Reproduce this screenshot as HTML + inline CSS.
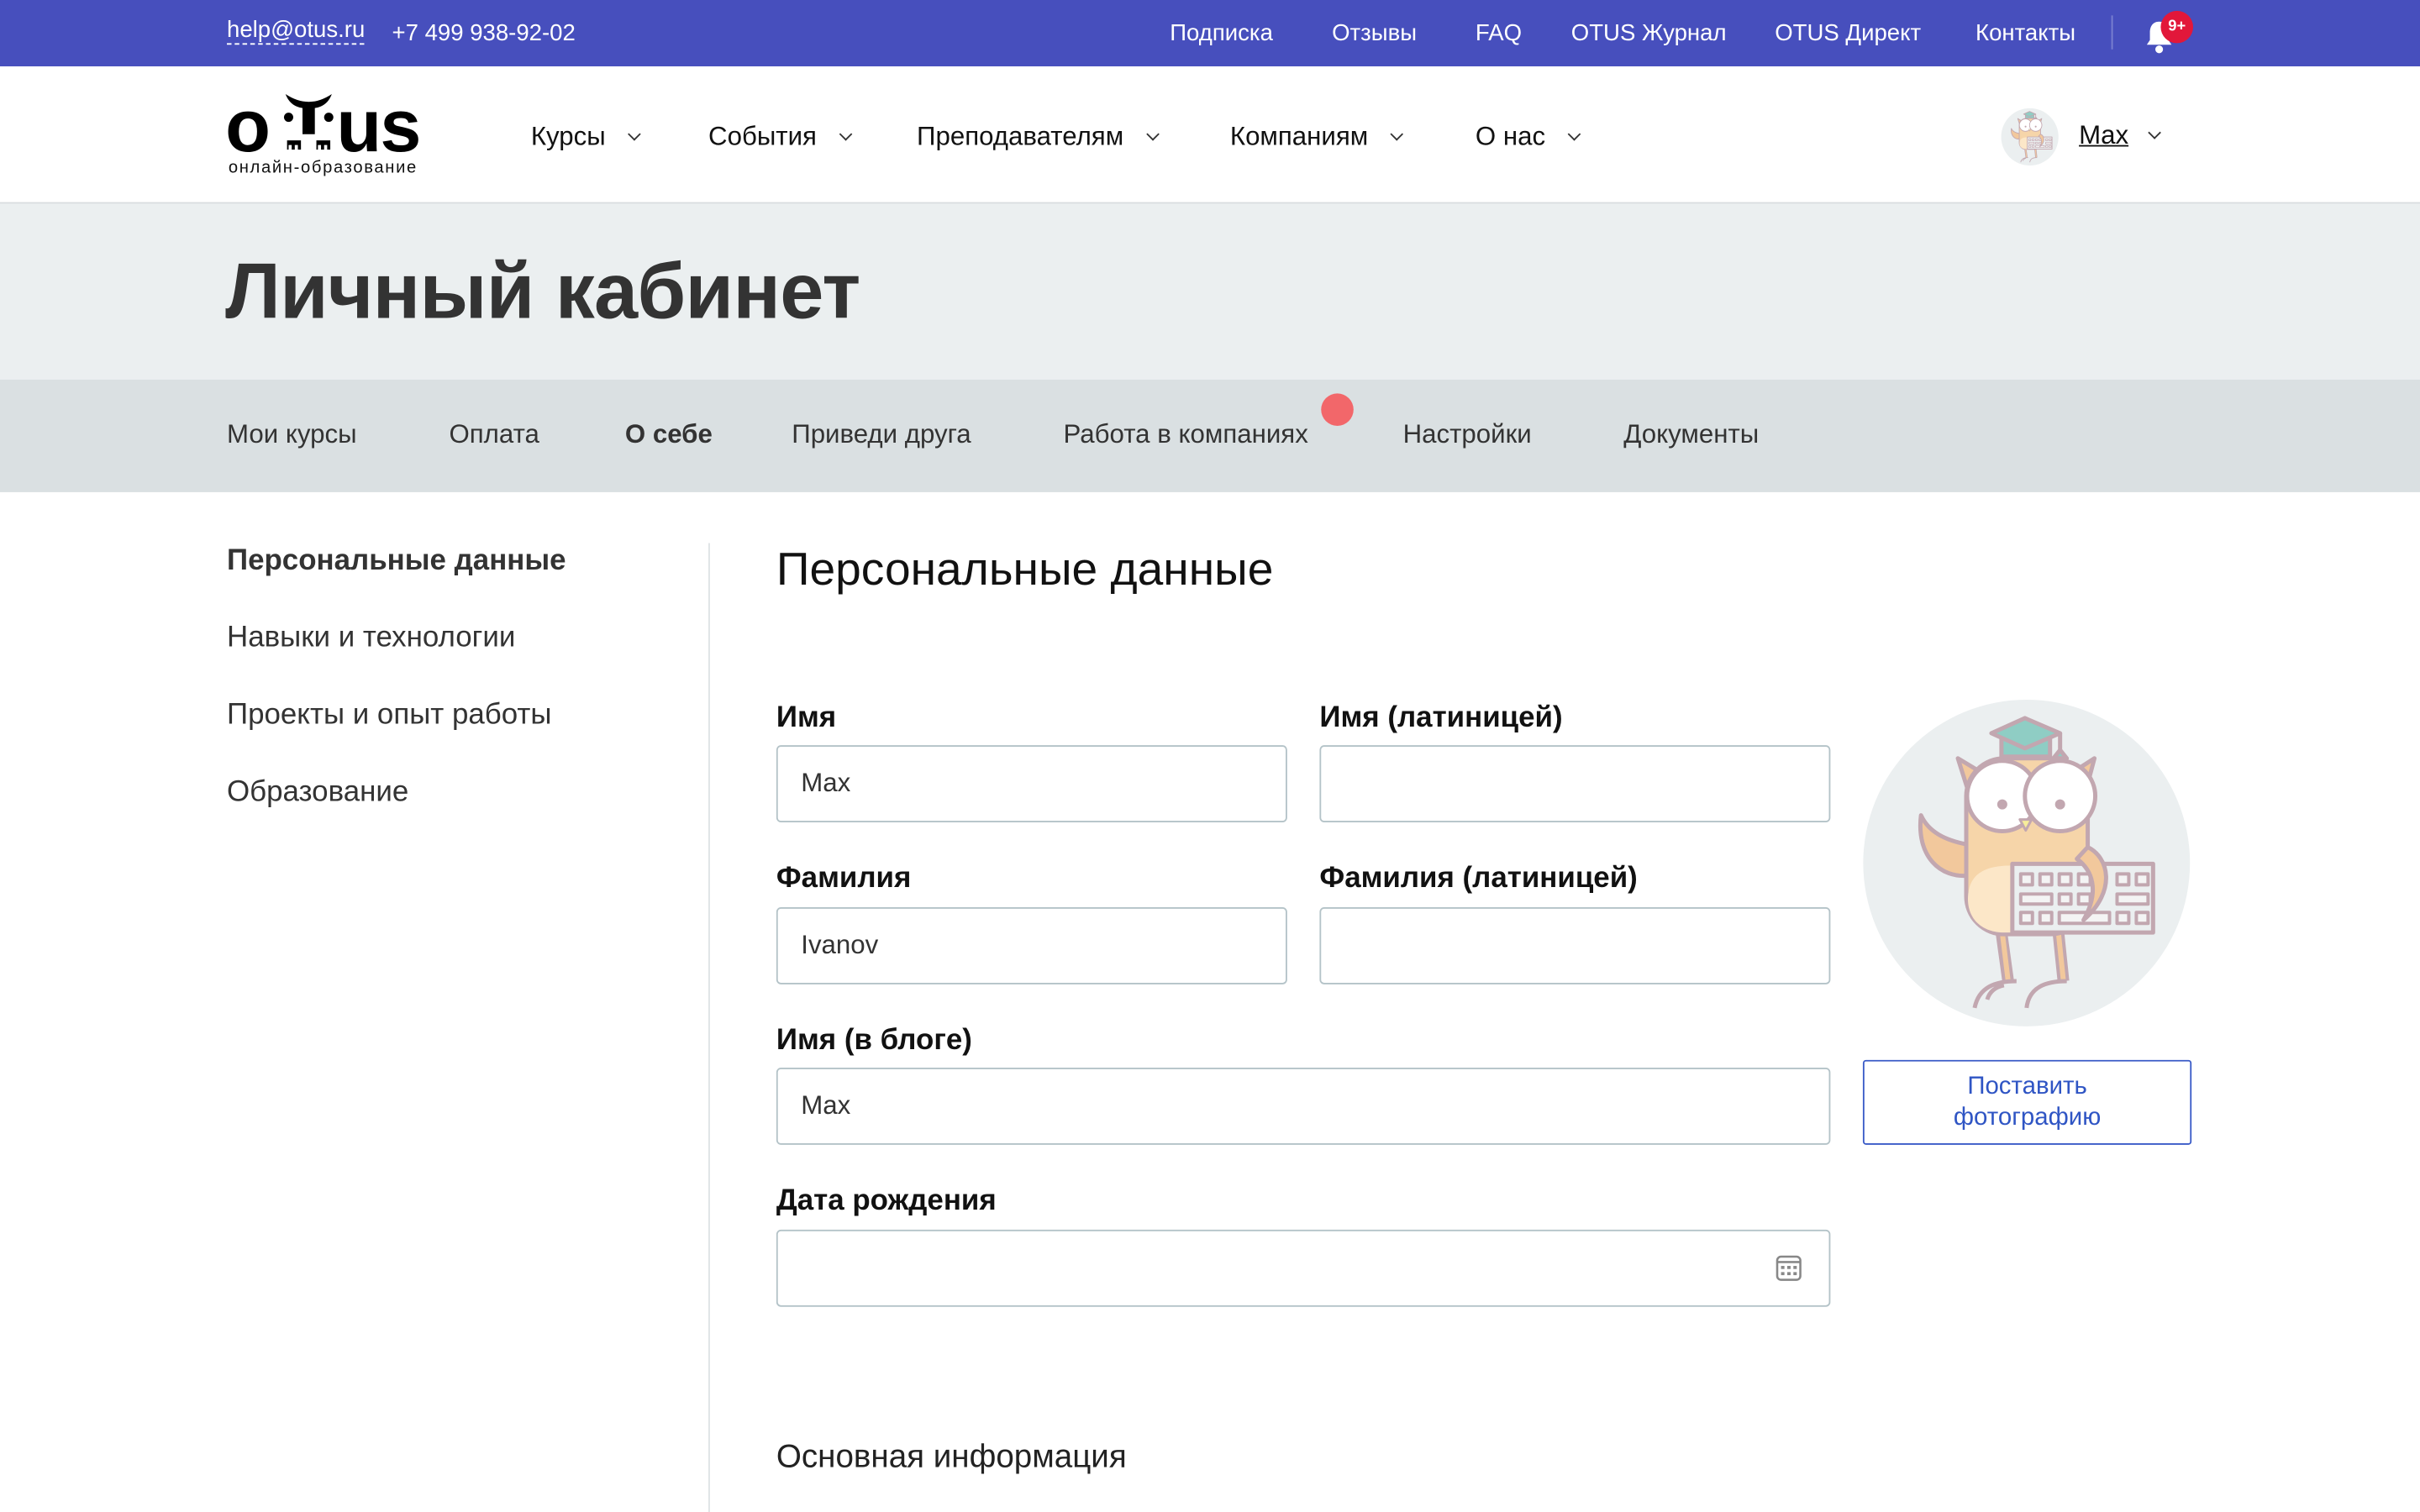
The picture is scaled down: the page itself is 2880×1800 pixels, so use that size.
<!DOCTYPE html>
<html><head><meta charset="utf-8">
<style>
*{box-sizing:border-box;margin:0;padding:0}
html,body{width:2880px;height:1800px;overflow:hidden;background:#fff}
#w{width:1568px;height:980px;transform:scale(1.836735);transform-origin:0 0;position:relative;font-family:"Liberation Sans",sans-serif;color:#222}
.a{position:absolute;white-space:nowrap}
.top{position:absolute;left:0;top:0;width:1568px;height:43px;background:#474fbd;color:#fff;font-size:15px}
.hdr{position:absolute;top:43px;left:0;width:1568px;height:89px;border-bottom:1px solid #d9dcdf}
.nav{font-size:17px;color:#111}
.chev{display:inline-block;width:6px;height:6px;border-right:1.5px solid #333;border-bottom:1.5px solid #333;transform:rotate(45deg);margin-left:16px;position:relative;top:-4px}
.band{position:absolute;top:132px;left:0;width:1568px;height:114px;background:#ebeff0}
.tabs{position:absolute;top:246px;left:0;width:1568px;height:73px;background:#dae0e2;font-size:17px;color:#333}
.lbl{font-size:19px;font-weight:bold;color:#111}
.inp{position:absolute;height:50px;border:1px solid #b4c3c8;border-radius:3px;font-size:17px;color:#333;padding:14px 15px}
.side{font-size:19px;color:#333}
</style></head><body><div id="w">
<div class="top">
<span class="a" style="left:147px;top:11px;border-bottom:1px dashed #fff;line-height:17px">help@otus.ru</span>
<span class="a" style="left:254px;top:13px">+7 499 938-92-02</span>
<span class="a" style="left:758px;top:13px">Подписка</span>
<span class="a" style="left:863px;top:13px">Отзывы</span>
<span class="a" style="left:956px;top:13px">FAQ</span>
<span class="a" style="left:1018px;top:13px">OTUS Журнал</span>
<span class="a" style="left:1150px;top:13px">OTUS Директ</span>
<span class="a" style="left:1280px;top:13px">Контакты</span>
<div class="a" style="left:1368px;top:10px;width:1px;height:22px;background:#7a80d0"></div>
<svg class="a" style="left:1388px;top:11px" width="22" height="24" viewBox="0 0 22 24"><path d="M11 3c-4 0-6 3-6 7v5l-2 3h16l-2-3v-5c0-4-2-7-6-7z" fill="#fff"/><circle cx="11" cy="21" r="2.5" fill="#fff"/></svg>
<div class="a" style="left:1400px;top:7px;width:21px;height:21px;border-radius:50%;background:#e2173a;font-size:10px;font-weight:bold;text-align:center;line-height:21px">9+</div>
</div>
<div class="hdr">
<span class="a" style="left:146px;top:16px;font-size:48px;font-weight:bold;line-height:48px;color:#000">o</span>
<svg class="a" style="left:182px;top:16px" width="36" height="40" viewBox="0 0 36 40"><path d="M3 2 Q18 12 33 2 Q30 10 22 11 L22 28 L14 28 L14 11 Q6 10 3 2z" fill="#000"/><circle cx="5" cy="17" r="3" fill="#000"/><circle cx="31" cy="17" r="3" fill="#000"/><path d="M4 32h9v6h-2v-3h-2v3h-2v-3H5v3H4z M23 32h9v6h-2v-3h-2v3h-2v-3h-2v3h-1z" fill="#000"/></svg>
<span class="a" style="left:218px;top:16px;font-size:48px;font-weight:bold;line-height:48px;color:#000;letter-spacing:-1px">us</span>
<span class="a" style="left:148px;top:60px;font-size:11px;color:#111;letter-spacing:.9px">онлайн-образование</span>
<span class="a nav" style="left:344px;top:36px">Курсы<i class="chev"></i></span>
<span class="a nav" style="left:459px;top:36px">События<i class="chev"></i></span>
<span class="a nav" style="left:594px;top:36px">Преподавателям<i class="chev"></i></span>
<span class="a nav" style="left:797px;top:36px">Компаниям<i class="chev"></i></span>
<span class="a nav" style="left:956px;top:36px">О нас<i class="chev"></i></span>
<svg class="a" style="left:1295px;top:26px" width="40" height="40" viewBox="0 0 420 420"><use href="#owl"/></svg>
<span class="a nav" style="left:1347px;top:35px;text-decoration:underline">Max<i class="chev" style="margin-left:14px"></i></span>
</div>
<div class="band"><span class="a" style="left:146px;top:27px;font-size:51px;font-weight:bold;color:#333;letter-spacing:-0.4px">Личный кабинет</span></div>
<div class="tabs">
<span class="a" style="left:147px;top:26px">Мои курсы</span>
<span class="a" style="left:291px;top:26px">Оплата</span>
<span class="a" style="left:405px;top:26px;font-weight:bold">О себе</span>
<span class="a" style="left:513px;top:26px">Приведи друга</span>
<span class="a" style="left:689px;top:26px">Работа в компаниях</span>
<div class="a" style="left:856px;top:9px;width:21px;height:21px;border-radius:50%;background:#f2676a"></div>
<span class="a" style="left:909px;top:26px">Настройки</span>
<span class="a" style="left:1052px;top:26px">Документы</span>
</div>
<span class="a side" style="left:147px;top:353px;font-weight:bold">Персональные данные</span>
<span class="a side" style="left:147px;top:403px">Навыки и технологии</span>
<span class="a side" style="left:147px;top:453px">Проекты и опыт работы</span>
<span class="a side" style="left:147px;top:503px">Образование</span>
<div class="a" style="left:459px;top:352px;width:1px;height:628px;background:#dfe3e5"></div>
<span class="a" style="left:503px;top:353px;font-size:30px;color:#111">Персональные данные</span>
<span class="a lbl" style="left:503px;top:455px">Имя</span>
<span class="a lbl" style="left:855px;top:455px">Имя (латиницей)</span>
<div class="inp" style="left:503px;top:483px;width:331px">Max</div>
<div class="inp" style="left:855px;top:483px;width:331px"></div>
<span class="a lbl" style="left:503px;top:559px">Фамилия</span>
<span class="a lbl" style="left:855px;top:559px">Фамилия (латиницей)</span>
<div class="inp" style="left:503px;top:588px;width:331px">Ivanov</div>
<div class="inp" style="left:855px;top:588px;width:331px"></div>
<span class="a lbl" style="left:503px;top:664px">Имя (в блоге)</span>
<div class="inp" style="left:503px;top:692px;width:683px">Max</div>
<span class="a lbl" style="left:503px;top:768px">Дата рождения</span>
<div class="inp" style="left:503px;top:797px;width:683px"></div>
<svg class="a" style="left:1150px;top:813px" width="18" height="18" viewBox="0 0 18 18"><rect x="1.5" y="1.5" width="15" height="15" rx="2.5" fill="none" stroke="#888" stroke-width="1.4"/><line x1="1.5" y1="5" x2="16.5" y2="5" stroke="#888" stroke-width="1.4"/><g fill="#888"><rect x="4" y="7.5" width="2.2" height="2"/><rect x="8" y="7.5" width="2.2" height="2"/><rect x="12" y="7.5" width="2.2" height="2"/><rect x="4" y="11.5" width="2.2" height="2"/><rect x="8" y="11.5" width="2.2" height="2"/><rect x="12" y="11.5" width="2.2" height="2"/></g></svg>
<span class="a" style="left:503px;top:933px;font-size:21px;color:#222">Основная информация</span>
<svg class="a" style="left:1198px;top:447px" width="228" height="228" viewBox="0 0 420 420">
<defs><g id="owl">
<circle cx="212" cy="207" r="195" fill="#ebeff0"/>
<g stroke="#c2a7b0" stroke-width="5" stroke-linejoin="round">
<path d="M86 150 C80 200 110 225 142 222 L142 185 C115 180 95 170 86 150z" fill="#f2c89c"/>
<path d="M182 290 L190 348 M250 290 L256 348" stroke="#c2a7b0" stroke-width="14"/>
<path d="M183 290 L190 348 M250 290 L256 348" stroke="#f2c89c" stroke-width="6"/>
<path d="M150 380 C155 355 175 348 200 348 M212 380 C215 355 235 348 260 348 M165 370 C168 360 175 355 185 353" fill="none"/>
<path d="M130 82 L160 100 L142 120z M293 82 L265 100 L283 120z" fill="#f2c89c"/>
<rect x="140" y="82" width="145" height="210" rx="45" fill="#f6d5a9"/>
<path d="M142 250 C142 215 170 210 195 210 L195 290 L185 290 C160 290 142 275 142 250z" fill="#fce7c8" stroke="none"/>
<path d="M182 50 L182 80 L240 80 L240 50z" fill="#8fcdc4"/>
<path d="M170 52 L210 34 L252 52 L210 70z" fill="#8fcdc4"/>
<path d="M252 52 L252 72 L244 82 L260 82 L252 72" fill="#8fcdc4"/>
<circle cx="183" cy="127" r="42" fill="#fff"/>
<circle cx="252" cy="127" r="42" fill="#fff"/>
<path d="M204 155 L218 155 L211 168z" fill="#f7ed9a" stroke-width="3"/>
<rect x="195" y="208" width="168" height="82" fill="#ebeff0"/>
<g fill="#f4f4f4" stroke-width="4"><rect x="205" y="220" width="14" height="13"/><rect x="228" y="220" width="14" height="13"/><rect x="251" y="220" width="14" height="13"/><rect x="274" y="220" width="14" height="13"/><rect x="320" y="220" width="14" height="13"/><rect x="343" y="220" width="14" height="13"/><rect x="205" y="244" width="37" height="12"/><rect x="251" y="244" width="14" height="12"/><rect x="274" y="244" width="14" height="12"/><rect x="320" y="244" width="37" height="12"/><rect x="205" y="266" width="14" height="13"/><rect x="228" y="266" width="14" height="13"/><rect x="251" y="266" width="60" height="13"/><rect x="320" y="266" width="14" height="13"/><rect x="343" y="266" width="14" height="13"/></g>
<path d="M285 188 C310 200 320 240 280 275 C300 240 290 215 272 202z" fill="#f2c89c"/>
</g>
<circle cx="183" cy="137" r="6" fill="#c2a7b0"/><circle cx="252" cy="137" r="6" fill="#c2a7b0"/>
</g></defs>
<use href="#owl"/>
</svg>
<div class="a" style="left:1207px;top:687px;width:213px;height:55px;border:1px solid #3a5bc7;border-radius:2px;color:#2f55c4;font-size:16px;text-align:center;line-height:20px;padding-top:7px;white-space:normal">Поставить<br>фотографию</div>
</div></body></html>
